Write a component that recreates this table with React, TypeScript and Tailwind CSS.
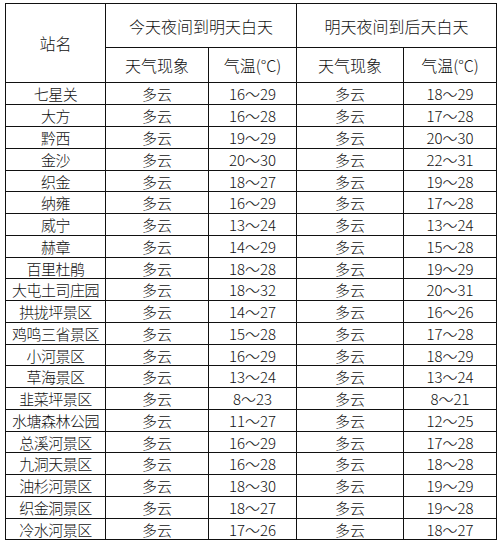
const rows: [string, string, string, string, string][] = [
  ['七星关', '多云', '16～29', '多云', '18～29'],
  ['大方', '多云', '16～28', '多云', '17～28'],
  ['黔西', '多云', '19～29', '多云', '20～30'],
  ['金沙', '多云', '20～30', '多云', '22～31'],
  ['织金', '多云', '18～27', '多云', '19～28'],
  ['纳雍', '多云', '16～29', '多云', '17～28'],
  ['威宁', '多云', '13～24', '多云', '13～24'],
  ['赫章', '多云', '14～29', '多云', '15～28'],
  ['百里杜鹃', '多云', '18～28', '多云', '19～29'],
  ['大屯土司庄园', '多云', '18～32', '多云', '20～31'],
  ['拱拢坪景区', '多云', '14～27', '多云', '16～26'],
  ['鸡鸣三省景区', '多云', '15～28', '多云', '17～28'],
  ['小河景区', '多云', '16～29', '多云', '18～29'],
  ['草海景区', '多云', '13～24', '多云', '13～24'],
  ['韭菜坪景区', '多云', '8～23', '多云', '8～21'],
  ['水塘森林公园', '多云', '11～27', '多云', '12～25'],
  ['总溪河景区', '多云', '16～29', '多云', '17～28'],
  ['九洞天景区', '多云', '16～28', '多云', '18～28'],
  ['油杉河景区', '多云', '18～30', '多云', '19～29'],
  ['织金洞景区', '多云', '18～27', '多云', '19～28'],
  ['冷水河景区', '多云', '17～26', '多云', '18～27'],
];

// a few rows are 1px shorter so the 21 rows fill 82..539
const shortRows = [4, 8, 12, 16, 20];

const cell = 'border border-[#111] text-center align-middle p-0 leading-none';

export default function App() {
  return (
    <div className="w-[500px] h-[546px] bg-white overflow-hidden pt-[3px] pl-[5px] font-light" style={{ fontFamily: '"Noto Sans CJK SC", sans-serif' }}>
      <table className="table-fixed border-collapse w-[491px] text-[#111]">
        <colgroup>
          <col className="w-[100px]" />
          <col className="w-[103px]" />
          <col className="w-[88px]" />
          <col className="w-[107px]" />
          <col className="w-[93px]" />
        </colgroup>
        <thead>
          <tr className="h-[44px]">
            <th rowSpan={2} className={`${cell} font-light text-[16px]`}>站名</th>
            <th colSpan={2} className={`${cell} font-light text-[16px]`}>今天夜间到明天白天</th>
            <th colSpan={2} className={`${cell} font-light text-[16px]`}>明天夜间到后天白天</th>
          </tr>
          <tr className="h-[35px]">
            <th className={`${cell} font-light text-[16px]`}>天气现象</th>
            <th className={`${cell} font-light text-[16px]`}>气温(°C)</th>
            <th className={`${cell} font-light text-[16px]`}>天气现象</th>
            <th className={`${cell} font-light text-[16px]`}>气温(°C)</th>
          </tr>
        </thead>
        <tbody className="text-[15px]">
          {rows.map((r, i) => (
            <tr key={r[0]} className={shortRows.includes(i) ? 'h-[21px]' : 'h-[22px]'}>
              {r.map((v, j) => (
                <td key={j} className={`${cell} ${j === 0 ? 'tracking-[-0.5px]' : ''}`}>{v}</td>
              ))}
            </tr>
          ))}
        </tbody>
      </table>
    </div>
  );
}
